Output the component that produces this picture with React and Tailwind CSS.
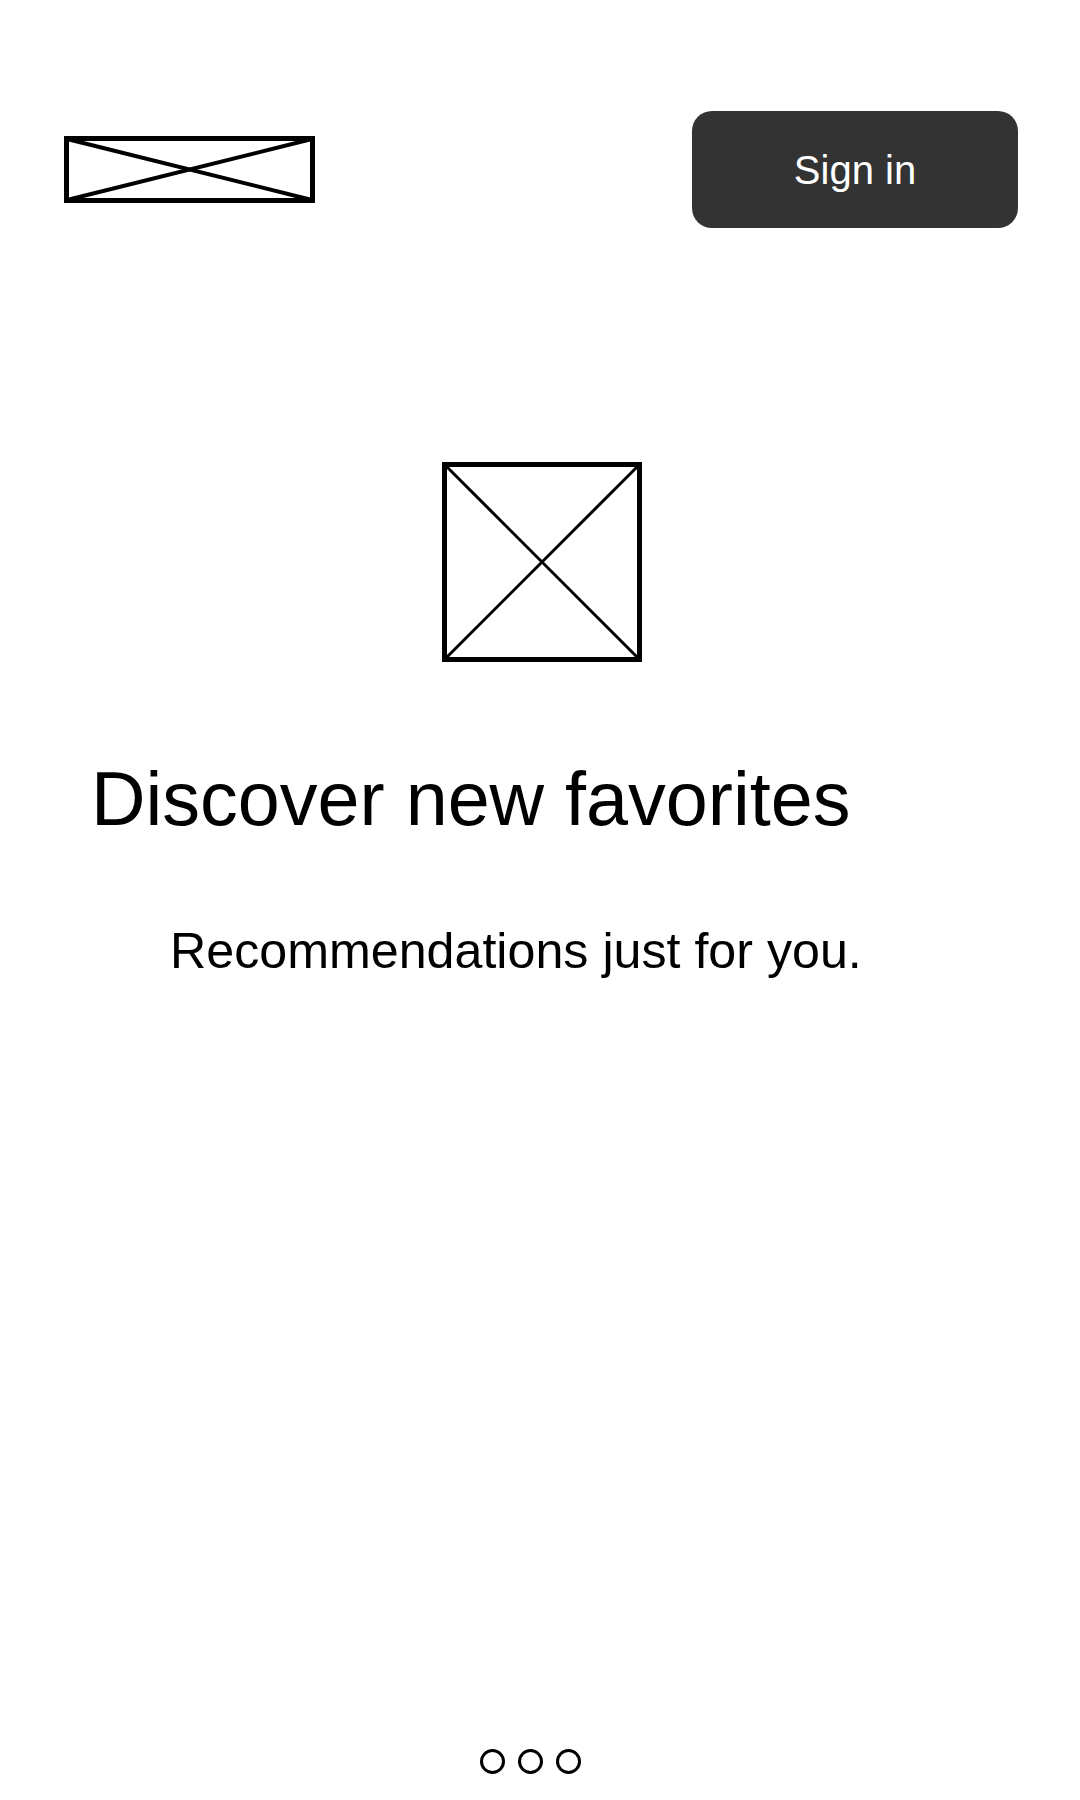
export default function App() {
  return (
    <div className="w-[1080px] h-[1800px] bg-white flex flex-col text-black font-['Liberation_Sans',Arial,sans-serif]">
      <header className="flex items-center justify-between pl-[64px] pr-[62px] pt-[111px]">
        <svg width="251" height="67" viewBox="0 0 251 67" aria-label="logo">
          <rect x="2.5" y="2.5" width="246" height="62" fill="none" stroke="#000" strokeWidth="5" />
          <line x1="3" y1="3" x2="248" y2="64" stroke="#000" strokeWidth="4" />
          <line x1="3" y1="64" x2="248" y2="3" stroke="#000" strokeWidth="4" />
        </svg>
        <button className="w-[326px] h-[117px] rounded-[20px] bg-[#333333] text-white text-[40px] leading-none flex items-center justify-center">
          Sign in
        </button>
      </header>

      <div className="mt-[234px] pl-[442px]">
        <svg width="200" height="200" viewBox="0 0 200 200" aria-label="image">
          <rect x="2.5" y="2.5" width="195" height="195" fill="none" stroke="#000" strokeWidth="5" />
          <line x1="3" y1="3" x2="197" y2="197" stroke="#000" strokeWidth="3" />
          <line x1="3" y1="197" x2="197" y2="3" stroke="#000" strokeWidth="3" />
        </svg>
      </div>

      <h1 className="mt-[100px] pl-[91px] text-[75.5px] leading-none font-normal">
        Discover new favorites
      </h1>

      <p className="mt-[88px] pl-[170px] text-[50.2px] leading-none">
        Recommendations just for you.
      </p>

      <div className="mt-auto pb-[26px] pl-[480px] flex gap-[13px]">
        <span className="w-[25px] h-[25px] rounded-full border-[3px] border-black" />
        <span className="w-[25px] h-[25px] rounded-full border-[3px] border-black" />
        <span className="w-[25px] h-[25px] rounded-full border-[3px] border-black" />
      </div>
    </div>
  );
}
